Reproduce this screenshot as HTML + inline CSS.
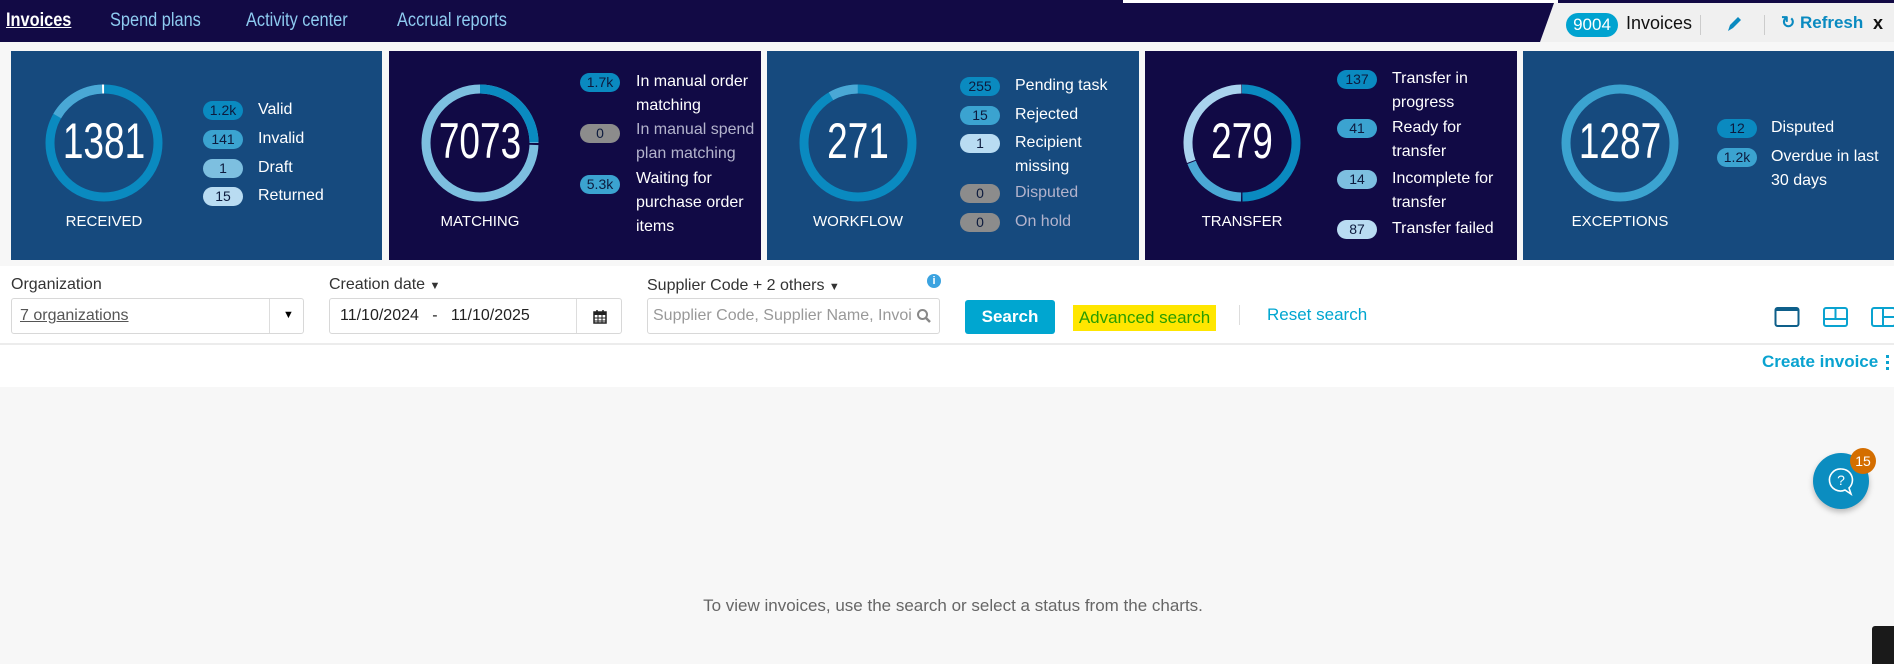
<!DOCTYPE html>
<html><head><meta charset="utf-8"><style>
*{margin:0;padding:0;box-sizing:border-box}
body{width:1894px;height:664px;overflow:hidden;background:#f7f7f7;font-family:"Liberation Sans",sans-serif;position:relative}
.a{position:absolute;white-space:nowrap}
.nav{left:0;top:0;width:1894px;height:42px;background:#120a45}
.nav span{position:absolute;top:10px;font-size:19px;color:#8ecbf0;transform:scaleX(.86);transform-origin:left}
.card{top:51px;height:209px}
.blue{background:#164a7e}.navy{background:#110a45}
.pill{position:absolute;width:40px;height:19px;border-radius:10px;font-size:14px;color:#0d1b3e;text-align:center;line-height:19px}
.t{position:absolute;color:#fff;font-size:16px;line-height:24px}
.num{position:absolute;color:#fff;font-size:50px;width:140px;text-align:center;top:66px;transform:scaleX(.74)}
.lab{position:absolute;color:#fff;font-size:15px;width:160px;text-align:center;top:164px}
.p1{background:#0a8ac0}.p2{background:#3ba3d0}.p3{background:#7dbfe0}.p4{background:#b9dcf2}.pg{background:#8c8c8c}
.f{font-size:16px;color:#333}
.box{position:absolute;top:298px;height:36px;border:1px solid #d8d8d8;border-radius:3px;background:#fff}
</style></head><body>
<div class="a nav">
<span style="left:6px;color:#fff;font-weight:bold;text-decoration:underline">Invoices</span>
<span style="left:110px">Spend plans</span>
<span style="left:246px">Activity center</span>
<span style="left:397px">Accrual reports</span>
</div>
<div class="a" style="left:1123px;top:0;width:435px;height:3px;background:#fff"></div>
<svg class="a" style="left:1540px;top:3px" width="354" height="39"><polygon points="14,0 354,0 354,39 0,39" fill="#f0f0f0"/></svg>
<div class="a" style="left:1566px;top:13px;width:52px;height:24px;border-radius:12px;background:#00a3d0;color:#fff;font-size:17px;text-align:center;line-height:24px">9004</div>
<div class="a" style="left:1626px;top:13px;font-size:18px;color:#111">Invoices</div>
<div class="a" style="left:1700px;top:15px;width:1px;height:20px;background:#ccc"></div>
<svg class="a" style="left:1726px;top:15px" width="16" height="18"><path d="M2 16 L4 10 L12 2 L15 5 L7 13 Z" fill="#0a8ac0"/></svg>
<div class="a" style="left:1764px;top:15px;width:1px;height:20px;background:#ccc"></div>
<div class="a" style="left:1781px;top:13px;font-size:17px;color:#0a8ac0;font-weight:bold">&#x21BB; Refresh</div>
<div class="a" style="left:1873px;top:13px;font-size:18px;color:#111;font-weight:bold">x</div>

<div class="a card blue" style="left:11px;width:371px"></div>
<div class="a card navy" style="left:389px;width:372px"></div>
<div class="a card blue" style="left:767px;width:372px"></div>
<div class="a card navy" style="left:1145px;width:372px"></div>
<div class="a card blue" style="left:1523px;width:371px"></div>

<svg class="a" style="left:0;top:51px" width="1894" height="209">
<g fill="none" stroke-width="9">
<g transform="translate(104,92) rotate(-90)"><circle r="54" stroke="#0a8ac0"/><circle r="54" stroke="#4aa8d5" stroke-dasharray="55 300" transform="rotate(-60)"/><circle r="54" stroke="#fff" stroke-dasharray="2 400" transform="rotate(-2)"/></g>
<g transform="translate(480,92) rotate(-90)"><circle r="54" stroke="#7dbfe0"/><circle r="54" stroke="#0a8ac0" stroke-dasharray="84 300"/><circle r="54" stroke="#110a45" stroke-width="10" stroke-dasharray="2 400" transform="rotate(90)"/></g>
<g transform="translate(858,92) rotate(-90)"><circle r="54" stroke="#0a8ac0"/><circle r="54" stroke="#4aa8d5" stroke-dasharray="28 330" transform="rotate(-30)"/></g>
<g transform="translate(1242,92) rotate(-90)"><circle r="54" stroke="#0a8ac0" stroke-dasharray="169 200"/><circle r="54" stroke="#4aa8d5" stroke-dasharray="64 300" transform="rotate(181)"/><circle r="54" stroke="#a9d3ee" stroke-dasharray="103 300" transform="rotate(250)"/></g>
<g transform="translate(1620,92) rotate(-90)"><circle r="54" stroke="#3ba3d0"/></g>
</g></svg>

<div class="num" style="left:34px;top:112px">1381</div><div class="lab" style="left:24px;top:213px">RECEIVED</div>
<div class="num" style="left:410px;top:112px">7073</div><div class="lab" style="left:400px;top:213px">MATCHING</div>
<div class="num" style="left:788px;top:112px">271</div><div class="lab" style="left:778px;top:213px">WORKFLOW</div>
<div class="num" style="left:1172px;top:112px">279</div><div class="lab" style="left:1162px;top:213px">TRANSFER</div>
<div class="num" style="left:1550px;top:112px">1287</div><div class="lab" style="left:1540px;top:213px">EXCEPTIONS</div>

<div class="pill p1" style="left:203px;top:101px">1.2k</div><div class="t" style="left:258px;top:98px">Valid</div>
<div class="pill p2" style="left:203px;top:130px">141</div><div class="t" style="left:258px;top:127px">Invalid</div>
<div class="pill p3" style="left:203px;top:159px">1</div><div class="t" style="left:258px;top:156px">Draft</div>
<div class="pill p4" style="left:203px;top:187px">15</div><div class="t" style="left:258px;top:184px">Returned</div>

<div class="pill p1" style="left:580px;top:73px">1.7k</div><div class="t" style="left:636px;top:70px">In manual order<br>matching</div>
<div class="pill pg" style="left:580px;top:124px">0</div><div class="t" style="left:636px;top:118px;color:#b3b3cc">In manual spend<br>plan matching</div>
<div class="pill p2" style="left:580px;top:175px">5.3k</div><div class="t" style="left:636px;top:167px">Waiting for<br>purchase order<br>items</div>

<div class="pill p1" style="left:960px;top:77px">255</div><div class="t" style="left:1015px;top:74px">Pending task</div>
<div class="pill p2" style="left:960px;top:106px">15</div><div class="t" style="left:1015px;top:103px">Rejected</div>
<div class="pill p4" style="left:960px;top:134px">1</div><div class="t" style="left:1015px;top:131px">Recipient<br>missing</div>
<div class="pill pg" style="left:960px;top:184px">0</div><div class="t" style="left:1015px;top:181px;color:#b3b3cc">Disputed</div>
<div class="pill pg" style="left:960px;top:213px">0</div><div class="t" style="left:1015px;top:210px;color:#b3b3cc">On hold</div>

<div class="pill p1" style="left:1337px;top:70px">137</div><div class="t" style="left:1392px;top:67px">Transfer in<br>progress</div>
<div class="pill p2" style="left:1337px;top:119px">41</div><div class="t" style="left:1392px;top:116px">Ready for<br>transfer</div>
<div class="pill p3" style="left:1337px;top:170px">14</div><div class="t" style="left:1392px;top:167px">Incomplete for<br>transfer</div>
<div class="pill p4" style="left:1337px;top:220px">87</div><div class="t" style="left:1392px;top:217px">Transfer failed</div>

<div class="pill p1" style="left:1717px;top:119px">12</div><div class="t" style="left:1771px;top:116px">Disputed</div>
<div class="pill p2" style="left:1717px;top:148px">1.2k</div><div class="t" style="left:1771px;top:145px">Overdue in last<br>30 days</div>

<div class="a" style="left:0;top:266px;width:1894px;height:121px;background:#fff"></div>
<div class="a" style="left:0;top:343px;width:1894px;height:2px;background:#ececec"></div>

<div class="a f" style="left:11px;top:276px">Organization</div>
<div class="a f" style="left:329px;top:276px">Creation date <span style="font-size:11px">&#9660;</span></div>
<div class="a f" style="left:647px;top:277px">Supplier Code + 2 others <span style="font-size:11px">&#9660;</span></div>
<div class="a" style="left:927px;top:274px;width:14px;height:14px;border-radius:50%;background:#3ba3e0;color:#fff;font-size:11px;text-align:center;line-height:14px;font-weight:bold">i</div>

<div class="box" style="left:11px;width:293px"><span class="a" style="left:8px;top:8px;font-size:16px;color:#555;text-decoration:underline">7 organizations</span><div class="a" style="left:257px;top:0;width:1px;height:34px;background:#ddd"></div><span class="a" style="left:271px;top:10px;font-size:11px">&#9660;</span></div>
<div class="box" style="left:329px;width:293px"><span class="a" style="left:10px;top:8px;font-size:16px;color:#222">11/10/2024 &nbsp; - &nbsp; 11/10/2025</span><div class="a" style="left:246px;top:0;width:1px;height:34px;background:#ddd"></div>
<svg class="a" style="left:263px;top:10px" width="14" height="15"><rect x="1" y="3" width="12" height="11" fill="none" stroke="#222" stroke-width="1.5"/><rect x="1" y="3" width="12" height="3" fill="#222"/><path d="M5 6v8M9 6v8M1 9h12M1 12h12" stroke="#222"/><path d="M4 1v3M10 1v3" stroke="#222" stroke-width="1.5"/></svg></div>
<div class="box" style="left:647px;width:293px"><span class="a" style="left:5px;top:8px;font-size:16px;color:#999">Supplier Code, Supplier Name, Invoi</span>
<svg class="a" style="left:268px;top:9px" width="16" height="16"><circle cx="6.5" cy="6.5" r="4.5" fill="none" stroke="#888" stroke-width="2"/><path d="M10 10l4 4" stroke="#888" stroke-width="2.5"/></svg></div>

<div class="a" style="left:965px;top:300px;width:90px;height:34px;border-radius:3px;background:#00a6d0;color:#fff;font-size:17px;font-weight:bold;text-align:center;line-height:34px">Search</div>
<div class="a" style="left:1073px;top:305px;width:143px;height:26px;background:#ffe600;color:#2a9d00;font-size:17px;text-align:center;line-height:26px">Advanced search</div>
<div class="a" style="left:1239px;top:305px;width:1px;height:20px;background:#ddd"></div>
<div class="a" style="left:1267px;top:305px;font-size:17px;color:#00a6d0">Reset search</div>

<svg class="a" style="left:1774px;top:306px" width="120" height="22">
<rect x="1.5" y="2" width="23" height="18" rx="2" fill="none" stroke="#0e5f8a" stroke-width="2"/><rect x="1.5" y="2" width="23" height="3" fill="#0e5f8a"/>
<rect x="50" y="2" width="23" height="18" rx="2" fill="none" stroke="#0aa3d0" stroke-width="2"/><path d="M50 13h23M61.5 2v11" stroke="#0aa3d0" stroke-width="2"/>
<rect x="98" y="2" width="23" height="18" rx="2" fill="none" stroke="#0aa3d0" stroke-width="2"/><path d="M109 2v18M109 11h12" stroke="#0aa3d0" stroke-width="2"/>
</svg>

<div class="a" style="left:1762px;top:352px;font-size:17px;color:#0aa3d0;font-weight:bold">Create invoice</div>
<div class="a" style="left:1886px;top:355px;width:3px;height:15px;border-left:3px dotted #0aa3d0"></div>

<div class="a" style="left:0;top:596px;width:1906px;text-align:center;font-size:17px;color:#666">To view invoices, use the search or select a status from the charts.</div>

<div class="a" style="left:1813px;top:453px;width:56px;height:56px;border-radius:50%;background:#0b8dc0;box-shadow:0 3px 6px rgba(0,0,0,.25)"></div>
<svg class="a" style="left:1826px;top:466px" width="30" height="32"><path d="M15 3a11 11 0 1 0 4 21l6 4-2-6a11 11 0 0 0-8-19z" fill="none" stroke="#fff" stroke-width="1.6"/><text x="15" y="19" font-size="14" fill="#fff" text-anchor="middle" font-family="Liberation Sans">?</text></svg>
<div class="a" style="left:1850px;top:448px;width:26px;height:26px;border-radius:50%;background:#d46e00;color:#fff;font-size:14px;text-align:center;line-height:26px">15</div>

<div class="a" style="left:1872px;top:626px;width:22px;height:38px;background:#1a1a1a;border-radius:3px 0 0 0"></div>
</body></html>
